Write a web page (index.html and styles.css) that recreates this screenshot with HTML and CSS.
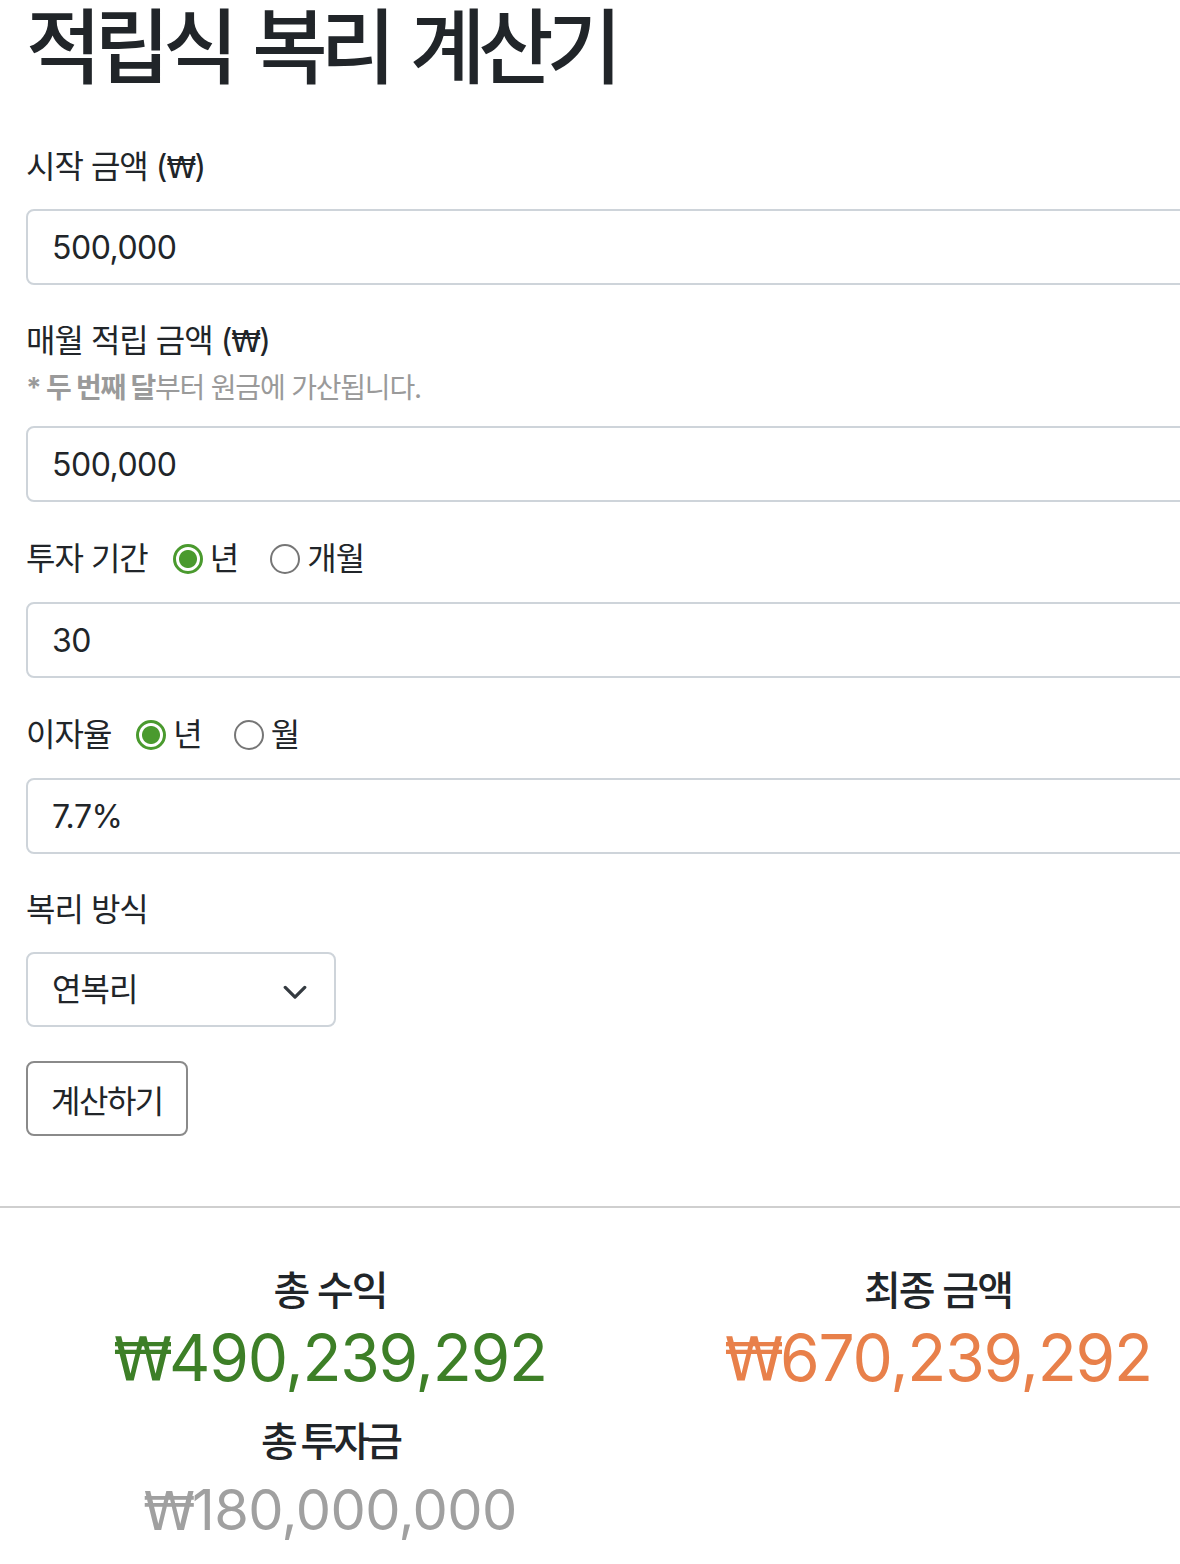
FILE: index.html
```html
<!DOCTYPE html>
<html lang="ko">
<head>
<meta charset="utf-8">
<title>적립식 복리 계산기</title>
<link rel="stylesheet" href="styles.css">
</head>
<body>
<div class="page">
  <h1 class="title">적립식 복리 계산기</h1>

  <div class="field">
    <label class="label" for="start">시작 금액 (<span class="won">₩</span>)</label>
    <input class="control" id="start" type="text" value="500,000">
  </div>

  <div class="field">
    <label class="label label-tight" for="monthly">매월 적립 금액 (<span class="won">₩</span>)</label>
    <p class="note"><b>* 두 번째 달</b>부터 원금에 가산됩니다.</p>
    <input class="control" id="monthly" type="text" value="500,000">
  </div>

  <div class="field">
    <div class="radio-row">
      <span class="row-title">투자 기간</span>
      <label class="radio"><input type="radio" name="period" checked><span>년</span></label>
      <label class="radio"><input type="radio" name="period"><span>개월</span></label>
    </div>
    <input class="control" type="text" value="30">
  </div>

  <div class="field">
    <div class="radio-row">
      <span class="row-title">이자율</span>
      <label class="radio"><input type="radio" name="rate" checked><span>년</span></label>
      <label class="radio"><input type="radio" name="rate"><span>월</span></label>
    </div>
    <input class="control" type="text" value="7.7%">
  </div>

  <div class="field field-select">
    <label class="label" for="method">복리 방식</label>
    <div class="select-wrap">
      <select class="select" id="method">
        <option>연복리</option>
        <option>월복리</option>
      </select>
      <svg class="chevron" width="32" height="24" viewBox="0 0 16 12" aria-hidden="true"><path d="M2 5l6 6 6-6" fill="none" stroke="#343a40" stroke-width="2" stroke-linecap="round" stroke-linejoin="round"/></svg>
    </div>
  </div>

  <button class="btn" type="button">계산하기</button>
</div>

<hr class="divider">

<div class="results">
  <div class="result-col">
    <h5 class="result-label">총 수익</h5>
    <p class="result-value value-green"><span class="won">₩</span>490,239,292</p>
    <h5 class="result-label result-label-2">총 투자금</h5>
    <p class="result-value result-value-sm value-gray"><span class="won">₩</span>180,000,000</p>
  </div>
  <div class="result-col">
    <h5 class="result-label">최종 금액</h5>
    <p class="result-value value-orange"><span class="won">₩</span>670,239,292</p>
  </div>
</div>
</body>
</html>
```

FILE: styles.css
```css
html, body {
  margin: 0;
  padding: 0;
  overflow: hidden;
  background: #fff;
}

body {
  font-family: Inter, "Noto Sans CJK KR", sans-serif;
  color: #212529;
  font-size: 32px;
  line-height: 1.5;
}

.won {
  font-family: "DejaVu Sans", "Liberation Sans", sans-serif;
  font-weight: 400;
  font-size: 0.94em;
  line-height: 1;
  letter-spacing: -0.06em;
}

.page {
  width: 1216px;
  padding-left: 26px;
}

.title {
  margin: 0;
  font-size: 82px;
  font-weight: 500;
  line-height: 96px;
  letter-spacing: -7px;
  word-spacing: 6px;
}

.field {
  margin-bottom: 32px;
}

.title + .field {
  margin-top: 47px;
}

.label {
  display: block;
  height: 48px;
  line-height: 48px;
  margin-bottom: 18px;
  letter-spacing: -1px;
}

.label-tight {
  margin-bottom: 0;
}

.note {
  margin: 2px 0 17px;
  height: 42px;
  font-size: 28px;
  line-height: 42px;
  color: #9a9a9a;
  letter-spacing: -1.2px;
}

.note b {
  font-weight: 700;
}

.control {
  display: block;
  box-sizing: border-box;
  width: 100%;
  height: 76px;
  margin: 0;
  padding: 0 24px;
  border: 2px solid #ced4da;
  border-radius: 8px;
  font-family: Inter, "Noto Sans CJK KR", sans-serif;
  font-size: 32px;
  letter-spacing: -0.5px;
  color: #212529;
  background: #fff;
  outline: none;
}

.radio-row {
  display: flex;
  align-items: center;
  height: 50px;
  margin-bottom: 18px;
  letter-spacing: -1px;
}

.row-title {
  margin-right: 25px;
}

.radio {
  display: flex;
  align-items: center;
  margin-right: 32px;
}

.radio input {
  appearance: none;
  -webkit-appearance: none;
  box-sizing: border-box;
  width: 30px;
  height: 30px;
  margin: 0 7px 0 0;
  border: 2px solid #767676;
  border-radius: 50%;
  background: #fff;
}

.radio input:checked {
  border: 3px solid #4a9a2e;
  background: radial-gradient(circle, #4a9a2e 0 8.5px, #fff 9.5px);
}

.field-select {
  margin-bottom: 34px;
}

.select-wrap {
  position: relative;
  width: 310px;
}

.select {
  appearance: none;
  -webkit-appearance: none;
  box-sizing: border-box;
  width: 310px;
  height: 75px;
  padding: 0 24px;
  border: 2px solid #ced4da;
  border-radius: 8px;
  background: #fff;
  font-family: Inter, "Noto Sans CJK KR", sans-serif;
  font-size: 32px;
  color: #212529;
  letter-spacing: -1px;
}

.chevron {
  position: absolute;
  right: 28px;
  top: 27px;
  width: 26px;
  height: 20px;
}

.btn {
  box-sizing: border-box;
  height: 75px;
  padding: 0 23px;
  border: 2px solid #8a8a8a;
  border-radius: 8px;
  background: #fff;
  font-family: Inter, "Noto Sans CJK KR", sans-serif;
  font-size: 32px;
  color: #212529;
  letter-spacing: -1.5px;
}

.divider {
  margin: 70px 0 0;
  border: 0;
  border-top: 2px solid #cfcfcf;
  height: 0;
}

.results {
  display: grid;
  grid-template-columns: 608px 608px;
  width: 1216px;
  padding-left: 26px;
  margin-top: 59px;
}

.result-col {
  text-align: center;
}

.result-label {
  margin: 0;
  font-size: 40px;
  font-weight: 500;
  line-height: 48px;
  letter-spacing: -2px;
}

.result-label-2 {
  margin-top: 22px;
  letter-spacing: -4px;
}

.result-value {
  margin: 4px 0 0;
  font-size: 64px;
  line-height: 77px;
  font-weight: 400;
  letter-spacing: -1.2px;
}

.result-value-sm {
  margin-top: 8px;
  font-size: 56px;
  line-height: 72px;
  letter-spacing: -0.6px;
}

.value-green { color: #3d7f27; }
.value-orange { color: #e8804a; }
.value-gray { color: #a0a0a0; }
```
